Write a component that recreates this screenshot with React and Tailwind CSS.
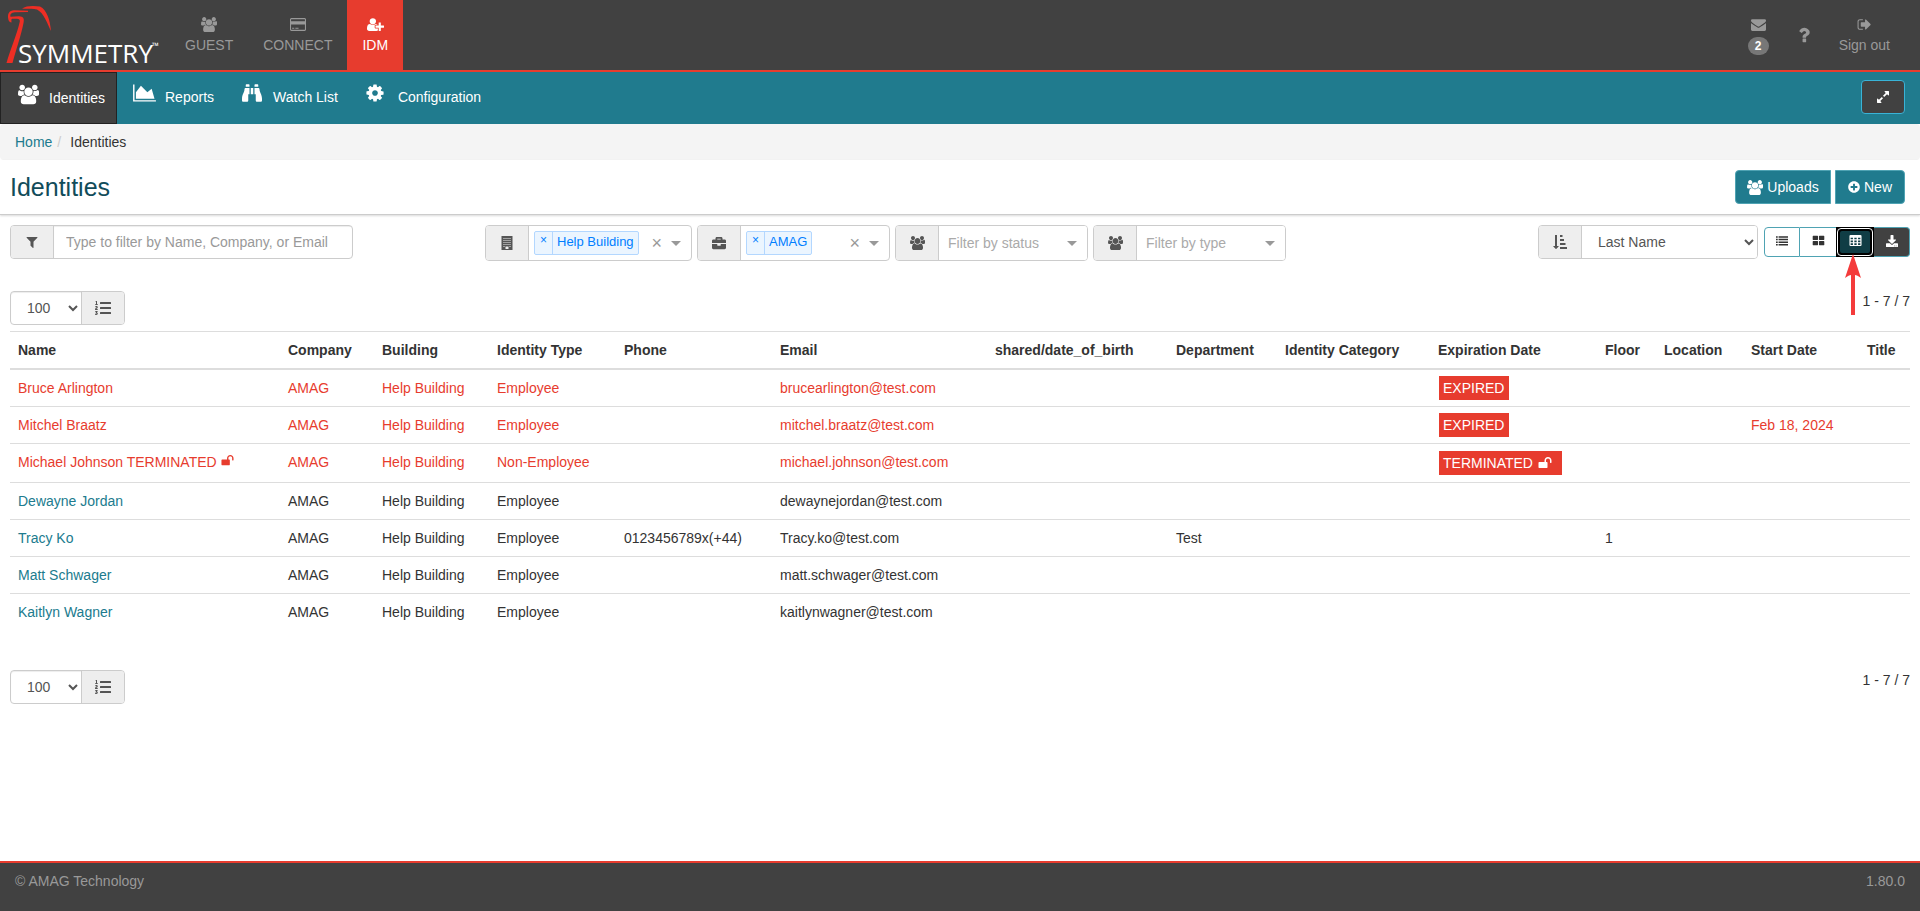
import React from "react";
import { FaBinoculars, FaBriefcase, FaListOl, FaPlusCircle, FaDownload } from "react-icons/fa";

const PATHS = {
  users: [1920, "M593 896q-162 5-265 128h-134q-82 0-138-40.5t-56-118.5q0-353 124-353 6 0 43.5 21t97.5 42.5 119 21.5q67 0 133-23-5 37-5 66 0 159 97 286zm1071 637q0 120-73 189.5t-194 69.5h-874q-121 0-194-69.5t-73-189.5q0-53 3.5-103.5t14-109 26.5-108.5 43-97.5 62-81 85.5-53.5 111.5-20q10 0 43 21.5t73 48 107 48 135 21.5 135-21.5 107-48 73-48 43-21.5q61 0 111.5 20t85.5 53.5 62 81 43 97.5 26.5 108.5 14 109 3.5 103.5zm-1024-1277q0 106-75 181t-181 75-181-75-75-181 75-181 181-75 181 75 75 181zm704 384q0 159-112.5 271.5t-271.5 112.5-271.5-112.5-112.5-271.5 112.5-271.5 271.5-112.5 271.5 112.5 112.5 271.5zm576 225q0 78-56 118.5t-138 40.5h-134q-103-123-265-128 97-127 97-286 0-29-5-66 66 23 133 23 59 0 119-21.5t97.5-42.5 43.5-21q124 0 124 353zm-128-609q0 106-75 181t-181 75-181-75-75-181 75-181 181-75 181 75 75 181z"],
  userPlus: [2048, "M704 896q-159 0-271.5-112.5t-112.5-271.5 112.5-271.5 271.5-112.5 271.5 112.5 112.5 271.5-112.5 271.5-271.5 112.5zm960 128h352q13 0 22.5 9.5t9.5 22.5v192q0 13-9.5 22.5t-22.5 9.5h-352v352q0 13-9.5 22.5t-22.5 9.5h-192q-13 0-22.5-9.5t-9.5-22.5v-352h-352q-13 0-22.5-9.5t-9.5-22.5v-192q0-13 9.5-22.5t22.5-9.5h352v-352q0-13 9.5-22.5t22.5-9.5h192q13 0 22.5 9.5t9.5 22.5v352zm-736 224q0 52 38 90t90 38h256v238q-68 50-171 50h-874q-121 0-194-69t-73-190q0-53 3.5-103.5t14-109 26.5-108.5 43-97.5 62-81 85.5-53.5 111.5-20q19 0 39 17 79 61 154.5 91.5t164.5 30.5 164.5-30.5 154.5-91.5q20-17 39-17 132 0 217 96h-223q-52 0-90 38t-38 90v192z"],
  card: [1920, "M1760 128q66 0 113 47t47 113v1216q0 66-47 113t-113 47h-1600q-66 0-113-47t-47-113v-1216q0-66 47-113t113-47h1600zM128 288v224h1664v-224q0-32-32-32h-1600q-32 0-32 32zM128 896v608q0 32 32 32h1600q32 0 32-32v-608zM256 1280h256v128h-256zM640 1280h384v128h-384z"],
  chart: [2048, "M2048 1536v128h-2048v-1536h128v1408h1920zm-384-1024l256 896h-1664v-576l448-576 576 576z"],
  cog: [1792, "M1152 896q0-106-75-181t-181-75-181 75-75 181 75 181 181 75 181-75 75-181zm512-109v222q0 12-8 23t-20 13l-185 28q-19 54-39 91 35 50 107 138 10 12 10 25t-9 23q-27 37-99 108t-94 71q-12 0-26-9l-138-108q-44 23-91 38-16 136-29 186-7 28-36 28h-222q-14 0-24.5-8.5t-11.5-21.5l-28-184q-49-16-90-37l-141 107q-10 9-25 9-14 0-25-11-126-114-165-168-7-10-7-23 0-12 8-23 15-21 51-66.5t54-70.5q-27-50-41-99l-183-27q-13-2-21-12.5t-8-23.5v-222q0-12 8-23t19-13l186-28q14-46 39-92-40-57-107-138-10-12-10-24 0-10 9-23 26-36 98.5-107.5t94.5-71.5q13 0 26 10l138 107q44-23 91-38 16-136 29-186 7-28 36-28h222q14 0 24.5 8.5t11.5 21.5l28 184q49 16 90 37l142-107q9-9 24-9 13 0 25 10 129 119 165 170 7 8 7 22 0 12-8 23-15 21-51 66.5t-54 70.5q26 50 41 98l183 28q13 2 21 12.5t8 23.5z"],
  envelope: [1792, "M1792 710v794q0 66-47 113t-113 47h-1472q-66 0-113-47t-47-113v-794q44 49 101 87 362 246 497 345 57 42 92.5 65.5t94.5 48 110 24.5h2q51 0 110-24.5t94.5-48 92.5-65.5q170-123 498-345 57-39 100-87zm0-294q0 79-49 151t-122 123q-376 261-468 325-10 7-42.5 31t-54 38.5-52 32.5-57.5 27-50 9h-2q-23 0-50-9t-57.5-27-52-32.5-54-38.5-42.5-31q-91-64-262-182.5t-205-142.5q-62-42-117-115.5t-55-136.5q0-78 41.5-130t118.5-52h1472q65 0 112.5 47t47.5 113z"],
  question: [1792, "M1088 1256v240q0 16-12 28t-28 12h-240q-16 0-28-12t-12-28v-240q0-16 12-28t28-12h240q16 0 28 12t12 28zm316-600q0 54-15.5 101t-35 76.5-55 59.5-57.5 43.5-61 35.5q-41 23-68.5 65t-27.5 67q0 17-12 32.5t-28 15.5h-240q-15 0-25.5-18.5t-10.5-37.5v-45q0-83 65-156.5t143-108.5q59-27 84-56t25-76q0-42-46.5-74t-107.5-32q-65 0-108 29-35 25-107 115-13 16-31 16-12 0-25-8l-164-125q-13-10-15.5-25t5.5-28q160-266 464-266 80 0 161 31t146 83 106 127.5 41 158.5z"],
  signOut: [1792, "M704 1440q0 4 1 20t.5 26.5-3 23.5-10 19.5-20.5 6.5h-320q-119 0-203.5-84.5t-84.5-203.5v-704q0-119 84.5-203.5t203.5-84.5h320q13 0 22.5 9.5t9.5 22.5q0 4 1 20t.5 26.5-3 23.5-10 19.5-20.5 6.5h-320q-66 0-113 47t-47 113v704q0 66 47 113t113 47h312l11.5 1 11.5 3 8 5.5 7 9 2 13.5zm928-544q0 26-19 45l-544 544q-19 19-45 19t-45-19-19-45v-288h-448q-26 0-45-19t-19-45v-384q0-26 19-45t45-19h448v-288q0-26 19-45t45-19 45 19l544 544q19 19 19 45z"],
  expand: [1792, "M883 1056q0 13-10 23l-332 332 144 144q19 19 19 45t-19 45-45 19h-448q-26 0-45-19t-19-45v-448q0-26 19-45t45-19 45 19l144 144 332-332q10-10 23-10t23 10l114 114q10 10 10 23zm781-864v448q0 26-19 45t-45 19-45-19l-144-144-332 332q-10 10-23 10t-23-10l-114-114q-10-10-10-23t10-23l332-332-144-144q-19-19-19-45t19-45 45-19h448q26 0 45 19t19 45z"],
  filter: [1792, "M1595 295q17 41-14 70l-493 493v742q0 42-39 59-13 5-25 5-27 0-45-19l-256-256q-19-19-19-45v-486l-493-493q-31-29-14-70 17-39 59-39h1280q42 0 59 39z"],
  unlock: [1792, "M1728 576v256q0 26-19 45t-45 19h-64q-26 0-45-19t-19-45v-256q0-106-75-181t-181-75-181 75-75 181v192h96q40 0 68 28t28 68v576q0 40-28 68t-68 28h-960q-40 0-68-28t-28-68v-576q0-40 28-68t68-28h672v-192q0-185 131.5-316.5t316.5-131.5 316.5 131.5 131.5 316.5z"],
  sort: [1792, "M736 1440q0 12-10 24l-319 319q-10 9-23 9-12 0-23-9l-320-320q-15-16-7-35 8-20 30-20h192v-1376q0-32 32-32h192q32 0 32 32v1376h192q32 0 32 32zM896 0h320v256h-320zM896 512h512v256h-512zM896 1024h704v256h-704zM896 1536h896v256h-896z"],
  list: [1792, "M0 192h256v224h-256zM384 192h1408v224h-1408zM0 576h256v224h-256zM384 576h1408v224h-1408zM0 960h256v224h-256zM384 960h1408v224h-1408zM0 1344h256v224h-256zM384 1344h1408v224h-1408z"],
  large: [1792, "M160 256h608q64 0 64 64v448q0 64-64 64h-608q-64 0-64-64v-448q0-64 64-64zM1024 256h608q64 0 64 64v448q0 64-64 64h-608q-64 0-64-64v-448q0-64 64-64zM160 960h608q64 0 64 64v448q0 64-64 64h-608q-64 0-64-64v-448q0-64 64-64zM1024 960h608q64 0 64 64v448q0 64-64 64h-608q-64 0-64-64v-448q0-64 64-64z"],
  table: [1792, "M224 128h1344q160 0 160 160v1216q0 160-160 160h-1344q-160 0-160-160v-1216q0-160 160-160zM224 512v224h320v-224zM736 512v224h320v-224zM1248 512v224h320v-224zM224 896v224h320v-224zM736 896v224h320v-224zM1248 896v224h320v-224zM224 1280v224h320v-224zM736 1280v224h320v-224zM1248 1280v224h320v-224z"],
  building: [1792, "M192 0h1408v1792h-1408zM448 256v128h128v-128zM704 256v128h128v-128zM960 256v128h128v-128zM1216 256v128h128v-128zM448 512v128h128v-128zM704 512v128h128v-128zM960 512v128h128v-128zM1216 512v128h128v-128zM448 768v128h128v-128zM704 768v128h128v-128zM960 768v128h128v-128zM1216 768v128h128v-128zM448 1024v128h128v-128zM704 1024v128h128v-128zM960 1024v128h128v-128zM1216 1024v128h128v-128zM448 1280v128h128v-128zM1216 1280v128h128v-128zM704 1344v320h384v-320z"],
};

function Icon({ name, className }) {
  const [w, d] = PATHS[name];
  return (
    <svg viewBox={`0 0 ${w} 1792`} className={`shrink-0 ${className}`} fill="currentColor" fillRule="evenodd" aria-hidden="true">
      <path d={d} />
    </svg>
  );
}

function Logo() {
  return (
    <a href="#home" aria-label="Symmetry home" className="block w-[170px] shrink-0">
      <svg viewBox="0 0 170 70" className="h-[70px] w-[170px]" aria-hidden="true">
        <g fill="#ee2e24">
          <path d="M22 8.500C26 5.500 34 5.500 40 6.500C47 10 50 20 51 31C47.500 24 44 13 37 9.500C32 8 27 9.500 22 8.500Z" />
          <path d="M8.500 20C7 14 9 10.500 14 10.300L28 10.800L28 12L15 12.300C11 12.500 10 14.500 10.500 16.800L19 16.300C23.500 16.500 24.500 18.500 23.500 23C21.500 34 16 50 12.500 63L6.500 63C10 50 17.500 33 19.800 21.500C20 19.500 19 19 17 18.800L12 18.800C11 19 11.500 21 11.500 22.500C10 22.500 9 21.500 8.500 20Z" />
        </g>
        <text x="18" y="63" fill="#ffffff" fontFamily="Open Sans, sans-serif" fontSize="26">SYMMETRY</text>
        <text x="152" y="49" fill="#ffffff" fontFamily="Open Sans, sans-serif" fontSize="9">™</text>
      </svg>
    </a>
  );
}

function TopTab({ icon, label, active, iconClass }) {
  return (
    <a
      href="#module"
      className={`flex flex-col items-center px-[15px] pt-[17px] ${active ? "bg-[#e73c2e] text-white" : "text-[#999999]"}`}
    >
      <Icon name={icon} className={iconClass} />
      <span className="mt-[3px] leading-5">{label}</span>
    </a>
  );
}

function Addon({ children, right }) {
  return (
    <span
      className={`flex w-[43px] shrink-0 items-center justify-center bg-[#eeeeee] text-[#555555] ${
        right ? "border-l border-[#cccccc]" : "border-r border-[#cccccc]"
      }`}
    >
      {children}
    </span>
  );
}

const BOX = "flex overflow-hidden rounded border border-[#cccccc] bg-white";

function Caret() {
  return <span className="block border-x-5 border-t-5 border-x-transparent border-t-[#999999]" />;
}

function TagFilter({ icon, label, tag, width }) {
  return (
    <div className={`${BOX} h-9 ${width}`} role="group" aria-label={label}>
      <Addon>{icon}</Addon>
      <div className="flex grow items-start pr-[10px] pl-[5px]">
        <span className="mt-[5px] flex h-6 rounded-xs border border-[#b3d7ff] bg-[#ebf5ff] text-[13px] leading-5 text-[#007eff]">
          <button type="button" aria-label={`Remove ${tag}`} className="flex w-[18px] justify-center border-r border-[#b3d7ff] text-[12px] leading-4">×</button>
          <span className="px-1">{tag}</span>
        </span>
        <button type="button" aria-label="Clear all" className="ml-auto self-center text-[18px] leading-5 text-[#999999]">×</button>
        <button type="button" aria-label={`Open ${label}`} className="ml-[9px] self-center"><Caret /></button>
      </div>
    </div>
  );
}

function SelectFilter({ label }) {
  return (
    <div className={`${BOX} h-9 w-[193px]`}>
      <Addon><Icon name="users" className="h-[14px] w-[15px]" /></Addon>
      <div className="relative grow">
        <select aria-label={label} className="h-full w-full appearance-none bg-white pl-[9px] text-[#aaaaaa] outline-none">
          <option>{label}</option>
        </select>
        <span className="pointer-events-none absolute top-[15px] right-[10px]"><Caret /></span>
      </div>
    </div>
  );
}

function Pager() {
  return (
    <div className="flex items-start justify-between">
      <div className={`${BOX} h-[34px] shadow-[inset_0_1px_1px_rgba(0,0,0,0.075)]`}>
        <select aria-label="Rows per page" className="h-full w-[70px] bg-transparent px-3 text-[#555555]">
          <option>100</option>
        </select>
        <Addon right><FaListOl className="size-4" /></Addon>
      </div>
      <span className="leading-5">1 - 7 / 7</span>
    </div>
  );
}

const COLUMNS = [
  ["Name", "w-[270px]"],
  ["Company", "w-[94px]"],
  ["Building", "w-[115px]"],
  ["Identity Type", "w-[127px]"],
  ["Phone", "w-[156px]"],
  ["Email", "w-[215px]"],
  ["shared/date_of_birth", "w-[181px]"],
  ["Department", "w-[109px]"],
  ["Identity Category", "w-[153px]"],
  ["Expiration Date", "w-[167px]"],
  ["Floor", "w-[59px]"],
  ["Location", "w-[87px]"],
  ["Start Date", "w-[116px]"],
  ["Title", "w-[51px]"],
];

const PEOPLE = [
  { name: "Bruce Arlington", type: "Employee", email: "brucearlington@test.com", flag: "EXPIRED" },
  { name: "Mitchel Braatz", type: "Employee", email: "mitchel.braatz@test.com", flag: "EXPIRED", start: "Feb 18, 2024" },
  { name: "Michael Johnson TERMINATED", type: "Non-Employee", email: "michael.johnson@test.com", flag: "TERMINATED", unlocked: true },
  { name: "Dewayne Jordan", type: "Employee", email: "dewaynejordan@test.com" },
  { name: "Tracy Ko", type: "Employee", phone: "0123456789x(+44)", email: "Tracy.ko@test.com", department: "Test", floor: "1" },
  { name: "Matt Schwager", type: "Employee", email: "matt.schwager@test.com" },
  { name: "Kaitlyn Wagner", type: "Employee", email: "kaitlynwagner@test.com" },
];

function PersonRow({ p, last }) {
  const cell = "px-2 py-2 align-top";
  return (
    <tr className={`${last ? "" : "border-b border-[#dddddd]"} ${p.flag ? "text-[#e73c2e]" : ""} ${p.unlocked ? "h-[39px]" : "h-[37px]"}`}>
      <td className={cell}>
        <a href="#identity" className={p.flag ? "" : "text-[#207b8e]"}>{p.name}</a>
        {p.unlocked && <Icon name="unlock" className="-mt-1 ml-1 inline size-[13px]" />}
      </td>
      <td className={cell}>AMAG</td>
      <td className={cell}>Help Building</td>
      <td className={cell}>{p.type}</td>
      <td className={cell}>{p.phone}</td>
      <td className={cell}>{p.email}</td>
      <td className={cell}></td>
      <td className={cell}>{p.department}</td>
      <td className={cell}></td>
      <td className={`pl-[9px] align-top ${p.unlocked ? "pt-[7px]" : "pt-[6px]"}`}>
        {p.flag && (
          <span className={`flex h-6 w-fit items-center bg-[#e73c2e] pl-1 text-white ${p.unlocked ? "pr-[10px]" : "pr-[5px]"}`}>
            {p.flag}
            {p.unlocked && <Icon name="unlock" className="ml-[5px] size-[14px]" />}
          </span>
        )}
      </td>
      <td className={cell}>{p.floor}</td>
      <td className={cell}></td>
      <td className={cell}>{p.start}</td>
      <td className={cell}></td>
    </tr>
  );
}

export default function App() {
  const viewBtn = "flex h-[30px] w-9 items-center justify-center pb-[3px]";
  const tealBtn = "flex h-[34px] items-center border border-[#4fa3b3] bg-[#207b8e] text-white";
  return (
    <div className="flex min-h-screen flex-col bg-white font-['Liberation_Sans',Arial,sans-serif] text-[14px] leading-5 text-[#333333]">
      <header>
        <div className="flex h-[72px] border-b-2 border-[#e73c2e] bg-[#414141]">
          <Logo />
          <nav aria-label="Modules" className="flex">
            <TopTab icon="users" label="GUEST" iconClass="h-[15px] w-4" />
            <TopTab icon="card" label="CONNECT" iconClass="h-[15px] w-4" />
            <TopTab icon="userPlus" label="IDM" active iconClass="h-[15px] w-[17px]" />
          </nav>
          <div className="ml-auto flex pr-[15px] text-[#999999]">
            <a href="#messages" aria-label="Messages" className="flex flex-col items-center px-[15px] pt-[17px]">
              <Icon name="envelope" className="size-[15px]" />
              <span className="mt-[5px] flex h-[18px] w-[21px] items-center justify-center rounded-full bg-[#777777] text-[12px] leading-3 font-bold text-white">2</span>
            </a>
            <a href="#help" aria-label="Help" className="flex items-center px-[10px]"><Icon name="question" className="size-5" /></a>
            <TopTab icon="signOut" label="Sign out" iconClass="size-[15px]" />
          </div>
        </div>
        <div className="flex h-[52px] bg-[#207b8e] text-white">
          <nav aria-label="Sections" className="flex">
            <a href="#identities" className="flex w-[117px] items-start border border-[#222222] bg-[#414141] pt-[11px] pl-[17px]">
              <Icon name="users" className="size-[21px]" />
              <span className="mt-1 ml-[10px]">Identities</span>
            </a>
            <a href="#reports" className="flex items-start pt-[11px] pr-[14px] pl-4">
              <Icon name="chart" className="h-5 w-[23px]" />
              <span className="mt-1 ml-[9px]">Reports</span>
            </a>
            <a href="#watch" className="flex items-start pt-[11px] pr-[15px] pl-[14px]">
              <FaBinoculars className="size-5" />
              <span className="mt-1 ml-[11px]">Watch List</span>
            </a>
            <a href="#configuration" className="flex items-start pt-[11px] pl-3">
              <Icon name="cog" className="size-5" />
              <span className="mt-1 ml-[13px]">Configuration</span>
            </a>
          </nav>
          <button type="button" aria-label="Expand" className="mt-2 mr-[15px] ml-auto flex h-[34px] w-11 items-center justify-center rounded border border-[#39b3d7] bg-[#414141]">
            <Icon name="expand" className="size-[14px]" />
          </button>
        </div>
      </header>

      <nav aria-label="Breadcrumb" className="flex h-9 items-center rounded bg-[#f4f4f4] px-[15px]">
        <a href="#home" className="text-[#207b8e]">Home</a>
        <span className="mr-[9px] ml-[5px] text-[#cccccc]">/</span>
        <span>Identities</span>
      </nav>

      <div className="flex h-[55px] items-center justify-between border-b border-[#cccccc] pr-[15px] pl-[10px] shadow-[0_1px_2px_rgba(0,0,0,0.15)]">
        <h1 className="text-[25px] leading-7 text-[#114c5a]">Identities</h1>
        <div className="flex gap-1">
          <button type="button" className={`${tealBtn} w-24 justify-center gap-1 rounded-l`}>
            <Icon name="users" className="h-[15px] w-4" />
            Uploads
          </button>
          <button type="button" className={`${tealBtn} w-[70px] justify-center gap-1 rounded-r`}>
            <FaPlusCircle className="size-3" />
            New
          </button>
        </div>
      </div>

      <main className="px-[10px] pt-[10px]">
        <div className="flex h-9 items-start">
          <div className="w-1/4 shrink-0">
            <div className={`${BOX} h-[34px] w-[343px]`}>
              <Addon><Icon name="filter" className="size-[14px]" /></Addon>
              <input
                type="text"
                aria-label="Filter identities"
                placeholder="Type to filter by Name, Company, or Email"
                className="grow px-3 shadow-[inset_0_1px_1px_rgba(0,0,0,0.075)] outline-none placeholder:text-[#999999]"
              />
            </div>
          </div>
          <div className="flex gap-[5px]">
            <TagFilter icon={<Icon name="building" className="size-[14px]" />} label="Building" tag="Help Building" width="w-[207px]" />
            <TagFilter icon={<FaBriefcase className="size-[14px]" />} label="Company" tag="AMAG" width="w-[193px]" />
            <SelectFilter label="Filter by status" />
            <SelectFilter label="Filter by type" />
          </div>
          <div className="ml-auto flex gap-[6px]">
            <div className={`${BOX} h-[34px] w-[220px]`}>
              <Addon><Icon name="sort" className="size-[14px]" /></Addon>
              <select aria-label="Sort by" className="grow bg-white px-3 text-[#555555]">
                <option>Last Name</option>
              </select>
            </div>
            <div className="relative mt-[2px] flex h-[30px]">
              <button type="button" aria-label="List view" className={`${viewBtn} rounded-l border border-[#4fa3b3]`}><Icon name="list" className="size-3" /></button>
              <button type="button" aria-label="Card view" className={`${viewBtn} border-y border-[#4fa3b3]`}><Icon name="large" className="size-[13px]" /></button>
              <button type="button" aria-label="Table view" className="flex h-[30px] w-[38px] bg-black p-px text-white">
                <span className="flex grow rounded border border-white bg-black p-[2px]">
                  <span className="flex grow items-center justify-center rounded-xs bg-[#103d45] pb-[3px]"><Icon name="table" className="size-[13px]" /></span>
                </span>
              </button>
              <button type="button" aria-label="Download" className={`${viewBtn} rounded-r border border-l-0 border-[#4fa3b3] bg-[#414141] text-white`}><FaDownload className="size-3" /></button>
              <svg viewBox="0 0 16 62" className="absolute top-[27px] left-[81px] h-[62px] w-4" aria-hidden="true">
                <path d="M8 0L16 24Q12 21 10 21V61H6V21Q4 21 0 24Z" fill="#f43b3b" />
              </svg>
            </div>
          </div>
        </div>

        <div className="mt-[30px]"><Pager /></div>

        <table className="mt-[6px] w-full table-fixed border-collapse border-t border-[#dddddd] text-left">
          <thead>
            <tr className="h-[37px] border-b-2 border-[#dddddd]">
              {COLUMNS.map(([label, width]) => (
                <th key={label} scope="col" className={`${width} px-2 font-bold whitespace-nowrap`}>{label}</th>
              ))}
            </tr>
          </thead>
          <tbody>
            {PEOPLE.map((p, i) => (
              <PersonRow key={p.name} p={p} last={i === PEOPLE.length - 1} />
            ))}
          </tbody>
        </table>

        <div className="mt-10 mb-10"><Pager /></div>
      </main>

      <footer className="mt-auto flex h-[50px] justify-between border-t-2 border-[#e73c2e] bg-[#414141] px-[15px] pt-2 text-[#999999]">
        <span>© AMAG Technology</span>
        <span>1.80.0</span>
      </footer>
    </div>
  );
}
